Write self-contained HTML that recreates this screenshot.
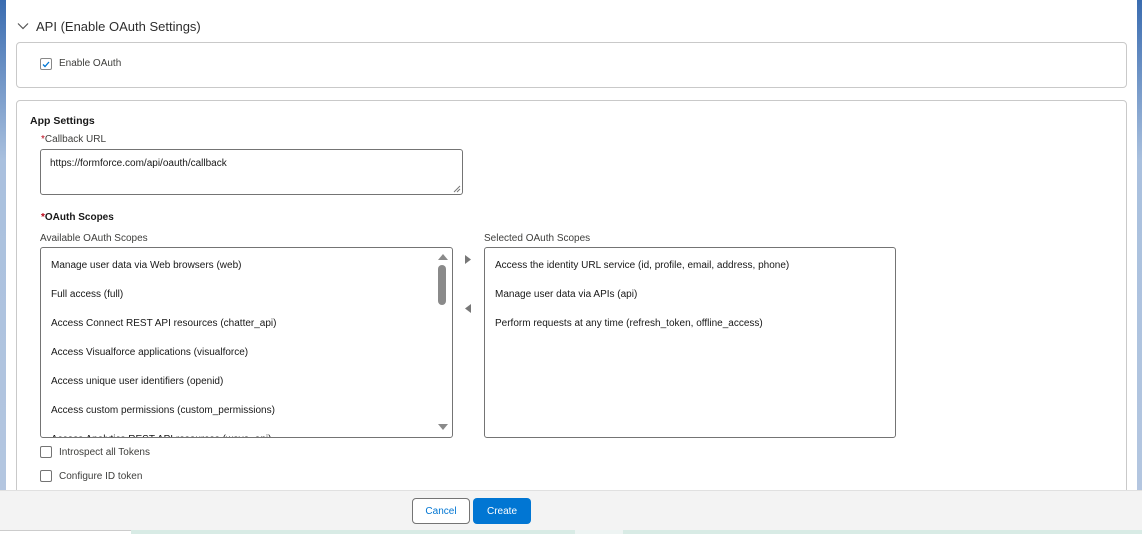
<!DOCTYPE html>
<html><head><style>
*{box-sizing:border-box;margin:0;padding:0}
body{width:1142px;height:534px;overflow:hidden;position:relative;background:#fff;font-family:"Liberation Sans",sans-serif;color:#181818}
.abs{position:absolute}
.strip{position:absolute;top:0;width:6px;height:534px;background:linear-gradient(#3a6cb0,#a9c0de 30%,#b5c7e0)}
.card{position:absolute;border:1px solid #c9c9c9;border-radius:4px;background:#fff}
.t{position:absolute;font-size:10px;white-space:nowrap;line-height:12px}
.cb{position:absolute;width:12px;height:12px;border:1px solid #747474;border-radius:2px;background:#fff}
.req{color:#ba0517}
</style></head><body>
<div class="strip" style="left:0"></div>
<div class="strip" style="left:1137px;width:5px"></div>
<svg class="abs" style="left:17px;top:22px" width="12" height="8"><path d="M1 1.5 L6 6.5 L11 1.5" stroke="#555" stroke-width="1.2" fill="none"/></svg>
<div class="t" style="left:36px;top:19px;font-size:13px;line-height:16px;color:#2e2e2e">API (Enable OAuth Settings)</div>
<div class="card" style="left:16px;top:42px;width:1111px;height:46px"></div>
<div class="cb" style="left:40px;top:58px;border-color:#888"></div>
<svg class="abs" style="left:42px;top:61px" width="8" height="7"><path d="M1 3.5 L3 5.5 L7 1" stroke="#0176d3" stroke-width="1.3" fill="none"/></svg>
<div class="t" style="left:59px;top:58px;color:#3e3e3c">Enable OAuth</div>
<div class="card" style="left:16px;top:100px;width:1111px;height:420px"></div>
<div class="t" style="left:30px;top:115px;font-weight:bold;font-size:10.5px">App Settings</div>
<div class="t" style="left:41px;top:134px;color:#3e3e3c"><span class="req">*</span>Callback URL</div>
<div class="abs" style="left:40px;top:149px;width:423px;height:46px;border:1px solid #747474;border-radius:3px;background:#fff"></div>
<div class="t" style="left:50px;top:158px">https://formforce.com/api/oauth/callback</div>
<svg class="abs" style="left:453px;top:185px" width="8" height="8"><path d="M1 7L7 1M4 7L7 4" stroke="#777" stroke-width="1"/></svg>
<div class="t" style="left:41px;top:212px;font-weight:bold"><span class="req">*</span>OAuth Scopes</div>
<div class="t" style="left:40px;top:233px;color:#3e3e3c">Available OAuth Scopes</div>
<div class="abs" style="left:40px;top:247px;width:413px;height:191px;border:1px solid #747474;border-radius:3px;background:#fff;overflow:hidden">
<div class="t" style="left:10px;top:12px">Manage user data via Web browsers (web)</div>
<div class="t" style="left:10px;top:41px">Full access (full)</div>
<div class="t" style="left:10px;top:70px">Access Connect REST API resources (chatter_api)</div>
<div class="t" style="left:10px;top:99px">Access Visualforce applications (visualforce)</div>
<div class="t" style="left:10px;top:128px">Access unique user identifiers (openid)</div>
<div class="t" style="left:10px;top:157px">Access custom permissions (custom_permissions)</div>
<div class="t" style="left:10px;top:186px">Access Analytics REST API resources (wave_api)</div>
<div class="abs" style="left:397px;top:17px;width:8px;height:40px;background:#8a8a8a;border-radius:4px"></div>
<svg class="abs" style="left:397px;top:6px" width="10" height="6"><path d="M0 6L5 0L10 6Z" fill="#8a8a8a"/></svg>
<svg class="abs" style="left:397px;top:176px" width="10" height="6"><path d="M0 0L5 6L10 0Z" fill="#8a8a8a"/></svg>
</div>
<svg class="abs" style="left:465px;top:255px" width="6" height="9"><path d="M0 0L6 4.5L0 9Z" fill="#777"/></svg>
<svg class="abs" style="left:465px;top:304px" width="6" height="9"><path d="M6 0L0 4.5L6 9Z" fill="#777"/></svg>
<div class="t" style="left:484px;top:233px;color:#3e3e3c">Selected OAuth Scopes</div>
<div class="abs" style="left:484px;top:247px;width:412px;height:191px;border:1px solid #747474;border-radius:3px;background:#fff">
<div class="t" style="left:10px;top:12px">Access the identity URL service (id, profile, email, address, phone)</div>
<div class="t" style="left:10px;top:41px">Manage user data via APIs (api)</div>
<div class="t" style="left:10px;top:70px">Perform requests at any time (refresh_token, offline_access)</div>
</div>
<div class="cb" style="left:40px;top:446px"></div>
<div class="t" style="left:59px;top:447px;color:#3e3e3c">Introspect all Tokens</div>
<div class="cb" style="left:40px;top:470px"></div>
<div class="t" style="left:59px;top:471px;color:#3e3e3c">Configure ID token</div>
<div class="abs" style="left:0;top:490px;width:1142px;height:40px;background:#f3f3f3;border-top:1px solid #e0e0e0"></div>
<div class="abs" style="left:412px;top:498px;width:58px;height:26px;border:1px solid #747474;border-radius:4px;background:#fff;color:#0176d3;font-size:10px;text-align:center;line-height:26px">Cancel</div>
<div class="abs" style="left:473px;top:498px;width:58px;height:26px;border-radius:4px;background:#0176d3;color:#fff;font-size:10px;text-align:center;line-height:27px">Create</div>
<div class="abs" style="left:0;top:530px;width:131px;height:4px;background:#fff;border-top:1px solid #ccc"></div>
<div class="abs" style="left:131px;top:530px;width:444px;height:4px;background:#d8ebe5"></div>
<div class="abs" style="left:575px;top:530px;width:48px;height:4px;background:#eef4f3"></div>
<div class="abs" style="left:623px;top:530px;width:519px;height:4px;background:#d8ebe5"></div>
</body></html>
